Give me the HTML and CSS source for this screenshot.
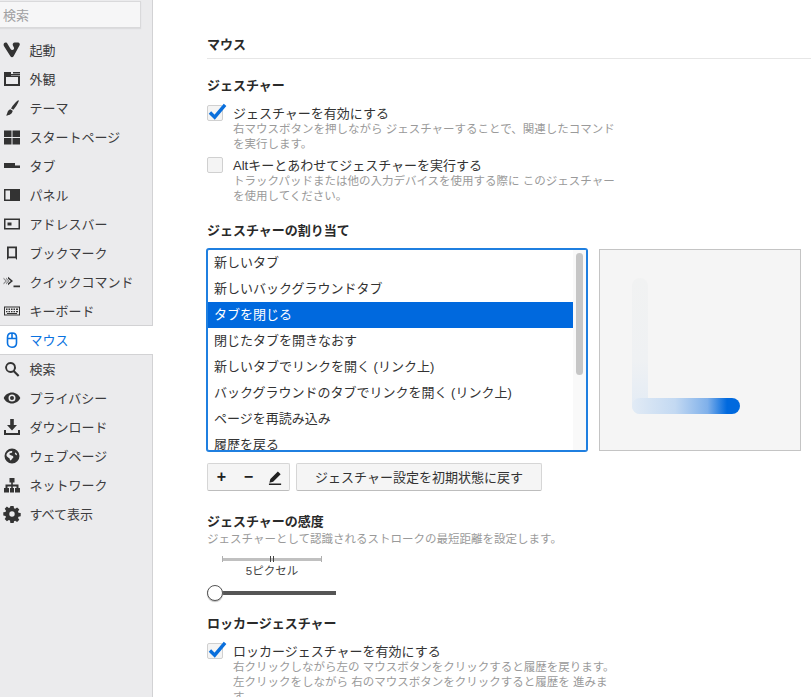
FILE: index.html
```html
<!DOCTYPE html>
<html lang="ja">
<head>
<meta charset="utf-8">
<title>マウス</title>
<link rel="stylesheet" href="styles.css">
</head>
<body>
<div class="app">
<nav class="side">
  <div class="search">検索</div>
  <ul class="menu">
    <li class="item"><svg class="ico" viewBox="0 0 18 18"><path d="M.6 3.6C.6 2.3 1.6 1.6 2.6 1.6c.9 0 1.5.5 2 1.4l3 5c.4.7 1 1 1.6 1 1.400 0 2.300-1.300 1.700-2.500l-1-2c-.7-1.500.3-2.900 1.800-2.900h3.300c1.400 0 2.300 1.500 1.600 2.700l-6 10.900c-.7 1.300-2.500 1.300-3.200 0L.9 5c-.2-.4-.3-.9-.3-1.400z"/></svg><span>起動</span></li>
    <li class="item"><svg class="ico" viewBox="0 0 18 18"><path d="M1 2h7v2h9v1H8v.5h9V16H1zm2 5v7h12V7z"/><rect x="10" y="2" width="7" height="1.500"/></svg><span>外観</span></li>
    <li class="item"><svg class="ico" viewBox="0 0 18 18"><path d="M14.800 1.500c.5-.4 1.200.1.900.7-1.200 2.800-3.200 6-5.300 8.600L8 9.400c1.900-3 4.400-6.300 6.800-7.900zM7.300 10.300l2.400 1.400c-.3 2.700-2.700 4.600-6.700 4.800 1.400-1.200 1-2.600 1.900-4.200.6-1 1.400-1.700 2.400-2z"/></svg><span>テーマ</span></li>
    <li class="item"><svg class="ico" viewBox="0 0 18 18"><path d="M1 2.500h7.500V9H1zM9.500 2.500H17V9H9.500zM1 10h7.500v6.500H1zM9.500 10H17v6.500H9.500z"/></svg><span>スタートページ</span></li>
    <li class="item"><svg class="ico" viewBox="0 0 18 18"><path d="M1 6h11v2h5v3H1z"/><path class="soft" d="M12 8h5v1H12z"/></svg><span>タブ</span></li>
    <li class="item"><svg class="ico" viewBox="0 0 18 18"><path d="M1 3h16v12H1zm1.500 1.500v9H7v-9z"/></svg><span>パネル</span></li>
    <li class="item"><svg class="ico" viewBox="0 0 18 18"><path d="M1 3.500h16v11H1zm1.500 1.500v8h13V5z"/><rect x="4.500" y="7.500" width="4" height="3"/></svg><span>アドレスバー</span></li>
    <li class="item"><svg class="ico" viewBox="0 0 18 18"><path d="M4 2.500h10v13.500l-1.500-1.800H5.500L4 16zm1.800 1.800v8.200h6.400V4.300z"/></svg><span>ブックマーク</span></li>
    <li class="item"><svg class="ico" viewBox="0 0 18 18"><path class="soft" d="M.5 4.500l3.500 3.500-3.500 3.500v-1.500l2-2-2-2zM3 4.500L6.500 8 3 11.500V10l2-2-2-2z"/><path d="M5 3.800L10 8l-5 4.200v-2l2.800-2.200L5 5.800zM10.500 12.500H17v1.800h-6.500z"/></svg><span>クイックコマンド</span></li>
    <li class="item"><svg class="ico" viewBox="0 0 18 18"><path d="M1 4.500h16v9H1zm1 1v7h14v-7z"/><path d="M3 6.500h1.500V8H3zm2.500 0H7V8H5.500zm2.500 0h1.500V8H8zm2.500 0H12V8h-1.500zm2.500 0h2V8h-2zM3 9h1.500v1.300H3zm2.500 0H7v1.300H5.500zM8 9h1.500v1.300H8zm2.500 0H12v1.300h-1.500zM13 9h2v1.300h-2zM4 11h10v1H4z"/></svg><span>キーボード</span></li>
    <li class="item active"><svg class="ico" viewBox="0 0 18 18"><path class="line" d="M4.500 6.500C4.500 3.800 6.200 2 9 2s4.500 1.800 4.500 4.500v5.500c0 2.500-1.800 4.200-4.500 4.200S4.500 14.500 4.500 12zM4.500 7.500h9M9 2v5.500"/></svg><span>マウス</span></li>
    <li class="item"><svg class="ico" viewBox="0 0 18 18"><path d="M7.500 2a5.500 5.500 0 0 1 4.400 8.800l4.500 4.500-1.500 1.500-4.500-4.500A5.500 5.500 0 1 1 7.500 2zm0 2a3.500 3.500 0 1 0 0 7 3.500 3.500 0 0 0 0-7z"/></svg><span>検索</span></li>
    <li class="item"><svg class="ico" viewBox="0 0 18 18"><path d="M9 3.500c3.700 0 6.800 2.300 8.300 5.500-1.500 3.200-4.600 5.500-8.300 5.500S2.200 12.200.7 9C2.200 5.800 5.300 3.500 9 3.500zm0 2a3.500 3.500 0 1 0 0 7 3.500 3.500 0 0 0 0-7zM9 7a2 2 0 1 1 0 4 2 2 0 0 1 0-4z"/></svg><span>プライバシー</span></li>
    <li class="item"><svg class="ico" viewBox="0 0 18 18"><path d="M7.200 1h3.600v6h3.200L9 12.500 4 7h3.200zM1 12h2v3h12v-3h2v5H1z"/></svg><span>ダウンロード</span></li>
    <li class="item"><svg class="ico" viewBox="0 0 18 18"><path fill-rule="evenodd" d="M9 1.500a7.500 7.500 0 1 1 0 15 7.500 7.500 0 0 1 0-15zM3.400 8c.2 2 2 2.300 3 3.300.5.600.3 1.500.8 2 .6.400 1.200-.1 1.400-.7.300-.9 1.300-1.300 1.700-2.100.3-.7-.2-1.500-1-1.700-1-.3-1.900-.7-2.700-1.200-.4-.3-.2-1 .3-1.300.6-.3 1.400-.2 2-.6.500-.4.500-1.200.1-1.700C6.600 3.500 3.700 5.500 3.400 8zm9.200-2.500c-.6.300-.9 1-.6 1.600.4.800 1.300.9 2 1.300.2-1-.4-2.100-1.400-2.900z"/></svg><span>ウェブページ</span></li>
    <li class="item"><svg class="ico" viewBox="0 0 18 18"><path d="M6.500 2h5v4.500H9.800v2H15.500V12h1.500v4.500h-5V12h1.500v-1.500H9.800V12h1.200v4.500H7V12h1.200v-1.500H4.500V12H6v4.500H1V12h1.500V8.500h5.700v-2H6.500z"/></svg><span>ネットワーク</span></li>
    <li class="item"><svg class="ico" viewBox="0 0 18 18"><path d="M7.400 1h3.200l.4 2.200 1.200.5 1.900-1.300 2.200 2.200-1.300 1.900.5 1.200 2.200.4v3.200l-2.200.4-.5 1.200 1.300 1.900-2.200 2.200-1.900-1.300-1.200.5-.4 2.200H7.400L7 15.400l-1.200-.5-1.900 1.300-2.200-2.200L3 12.100l-.5-1.200L.3 10.500V7.300l2.200-.4.5-1.200L1.700 3.800 3.900 1.600l1.900 1.300L7 2.400zM9 6.300a2.700 2.700 0 1 0 0 5.400 2.700 2.700 0 0 0 0-5.400z"/></svg><span>すべて表示</span></li>
  </ul>
</nav>
<main class="main">
  <h1 class="title">マウス</h1>

  <h2 class="head first">ジェスチャー</h2>
  <div class="opt">
    <span class="box on"><svg class="check" viewBox="0 0 20 18"><path d="M2 10l5 5L18 2"/></svg></span>
    <div class="opt-text">
      <div class="opt-label">ジェスチャーを有効にする</div>
      <div class="opt-desc">右マウスボタンを押しながら ジェスチャーすることで、関連したコマンド<br>を実行します。</div>
    </div>
  </div>
  <div class="opt second">
    <span class="box"></span>
    <div class="opt-text">
      <div class="opt-label">Altキーとあわせてジェスチャーを実行する</div>
      <div class="opt-desc">トラックパッドまたは他の入力デバイスを使用する際に このジェスチャー<br>を使用してください。</div>
    </div>
  </div>

  <h2 class="head assign">ジェスチャーの割り当て</h2>
  <div class="gesture">
    <div class="list">
      <ul class="rows">
        <li class="row">新しいタブ</li>
        <li class="row">新しいバックグラウンドタブ</li>
        <li class="row sel">タブを閉じる</li>
        <li class="row">閉じたタブを開きなおす</li>
        <li class="row">新しいタブでリンクを開く (リンク上)</li>
        <li class="row">バックグラウンドのタブでリンクを開く (リンク上)</li>
        <li class="row">ページを再読み込み</li>
        <li class="row">履歴を戻る</li>
      </ul>
      <div class="track"><div class="thumb"></div></div>
    </div>
    <div class="preview">
      <svg class="stroke" viewBox="0 0 200 200">
        <defs>
          <linearGradient id="gv" x1="0" y1="28" x2="0" y2="164" gradientUnits="userSpaceOnUse">
            <stop offset="0" stop-color="#f1f2f2"/><stop offset=".6" stop-color="#eff1f3"/><stop offset="1" stop-color="#e2ebf5"/>
          </linearGradient>
          <linearGradient id="gh" x1="32" y1="0" x2="140" y2="0" gradientUnits="userSpaceOnUse">
            <stop offset="0" stop-color="#e2ebf5"/><stop offset=".4" stop-color="#c3d9f2"/><stop offset=".7" stop-color="#7fb0ea"/><stop offset=".88" stop-color="#0069de"/><stop offset="1" stop-color="#0069de"/>
          </linearGradient>
        </defs>
        <path class="st-v" d="M40 36V156"/>
        <path class="st-h" d="M40 156H132"/>
      </svg>
    </div>
  </div>
  <div class="tools">
    <div class="group">
      <button class="gbtn">+</button>
      <button class="gbtn">−</button>
      <button class="gbtn"><svg class="pen" viewBox="0 0 16 16"><path d="M10.500 1.500l3 3-8 8-4 1 1-4zM1 14.500h13V16H1z"/></svg></button>
    </div>
    <button class="reset">ジェスチャー設定を初期状態に戻す</button>
  </div>

  <h2 class="head sens">ジェスチャーの感度</h2>
  <div class="plain-desc">ジェスチャーとして認識されるストロークの最短距離を設定します。</div>
  <div class="ruler"><span class="mark"></span></div>
  <div class="ruler-label">5ピクセル</div>
  <div class="slider"><span class="knob"></span></div>

  <h2 class="head rocker">ロッカージェスチャー</h2>
  <div class="opt">
    <span class="box on"><svg class="check" viewBox="0 0 20 18"><path d="M2 10l5 5L18 2"/></svg></span>
    <div class="opt-text">
      <div class="opt-label">ロッカージェスチャーを有効にする</div>
      <div class="opt-desc">右クリックしながら左の マウスボタンをクリックすると履歴を戻ります。<br>左クリックをしながら 右のマウスボタンをクリックすると履歴を 進みま<br>す。</div>
    </div>
  </div>
</main>
</div>
</body>
</html>
```

FILE: styles.css
```css
* { box-sizing: border-box; }
html, body { margin: 0; padding: 0; height: 697px; overflow: hidden; background: #fff; }
body { font-family: "Liberation Sans", "Noto Sans CJK JP", sans-serif; color: #333; font-size: 13px; }
ul { list-style: none; margin: 0; padding: 0; }
.app { display: flex; height: 697px; }

.side { flex: 0 0 153px; background: #ebebed; border-right: 1px solid #d2d2d4; padding-top: 1px; }
.search { width: 141px; height: 27px; background: #f6f6f7; border: 1px solid #d9d9db; border-left: 0; box-shadow: 0 1px 1px #dcdcde; padding-left: 3px; line-height: 27px; color: #a0a0a2; font-size: 13px; }
.menu { margin-top: 8px; }
.item { display: flex; align-items: center; height: 29px; padding: 0 0 2px 3px; gap: 8.500px; color: #3c3c3e; position: relative; }
.ico { width: 18px; height: 18px; flex: none; fill: #333; }
.ico .soft { fill: #8a8a8c; }
.active { height: 28px; margin: 0 -1px 1px 0; padding-bottom: 1px; background: #fff; color: #0a72e0; box-shadow: 0 -1px 0 #d2d2d4, 0 1px 0 #d2d2d4; }
.active .ico { fill: none; }
.active .line { fill: none; stroke: #0a72e0; stroke-width: 1.600; }

.main { flex: 1; min-width: 0; padding: 36px 0 0 54px; }
.title { margin: 0; font-size: 13px; line-height: 15px; font-weight: 700; padding: 1px 0 6px; border-bottom: 1px solid #e6e6e6; color: #2a2a2a; }
.head { margin: 0; font-size: 13px; line-height: 15px; padding-top: 1px; font-weight: 700; color: #2a2a2a; }
.head.first { margin-top: 18px; }
.head.assign { margin-top: 18px; }
.head.sens { margin-top: 22px; }
.head.rocker { margin-top: 14px; }

.opt { display: flex; gap: 10px; margin-top: 12px; }
.opt.second { margin-top: 5px; }
.box { flex: none; width: 16px; height: 16px; background: #f4f4f4; border: 1px solid #d0d0d0; border-radius: 2px; position: relative; }
.check { position: absolute; left: 0; top: -3px; width: 19px; height: 17px; overflow: visible; }
.check path { fill: none; stroke: #0a6fdc; stroke-width: 3.600; }
.opt-label { font-size: 13px; line-height: 15px; padding-top: 1px; color: #333; white-space: nowrap; }
.opt-desc { font-size: 11.500px; line-height: 15px; padding-top: 1px; color: #9a9a9a; white-space: nowrap; }
.plain-desc { font-size: 11.500px; line-height: 14px; padding-top: 2px; color: #9a9a9a; margin-top: 1px; white-space: nowrap; }

.gesture { display: flex; gap: 12px; margin-top: 11px; }
.list { display: flex; width: 380px; height: 202px; border: 1px solid #1f7fe0; box-shadow: 0 0 0 1px #1f7fe0; border-radius: 2px; overflow: hidden; background: #fff; }
.rows { flex: 1; min-width: 0; }
.row { height: 26px; line-height: 26px; padding-left: 6px; font-size: 13px; color: #333; white-space: nowrap; }
.row.sel { background: #0069de; color: #fff; }
.track { flex: 0 0 13px; background: #f9f9f9; padding: 3px 3px 0; }
.thumb { height: 122px; background: #c6c6c6; border-radius: 4px; }

.preview { flex: none; width: 202px; height: 202px; background: #f5f5f5; border: 1px solid #c4c4c4; }
.stroke { display: block; width: 200px; height: 200px; }
.st-v, .st-h { fill: none; stroke-width: 16; stroke-linecap: round; }
.st-v { stroke: url(#gv); }
.st-h { stroke: url(#gh); }

.tools { display: flex; gap: 6px; margin-top: 12px; }
.group { display: flex; height: 28px; border: 1px solid #d6d6d6; border-bottom-color: #bdbdbd; border-radius: 2px; background: #f5f5f5; }
.gbtn { width: 27px; height: 26px; padding: 0; border: 0; background: transparent; font-family: inherit; font-size: 16px; font-weight: 700; line-height: 24px; color: #222; display: flex; align-items: center; justify-content: center; }
.pen { width: 15px; height: 15px; fill: #222; }
.reset { width: 246px; height: 28px; padding: 0 0 2px; border: 1px solid #d6d6d6; border-bottom-color: #bdbdbd; border-radius: 2px; background: #f5f5f5; font-family: inherit; font-size: 13px; color: #333; }

.ruler { width: 100px; height: 6px; margin: 10px 0 0 15px; background: linear-gradient(#c0c0c0, #c0c0c0) center / 100% 3px no-repeat; border-left: 1px solid #b0b0b0; border-right: 1px solid #b0b0b0; position: relative; }
.mark { position: absolute; left: 47px; top: 0; width: 4px; height: 6px; border-left: 1px solid #444; border-right: 1px solid #444; }
.ruler-label { width: 100px; margin-left: 15px; text-align: center; font-size: 11.500px; line-height: 14px; margin-top: 2px; color: #444; }
.slider { width: 129px; height: 16px; margin-top: 7px; background: linear-gradient(#555, #555) center / 100% 4px no-repeat; border-radius: 2px; position: relative; }
.knob { position: absolute; left: 0; top: 0; width: 16px; height: 16px; border-radius: 50%; background: #fff; border: 1px solid #555; box-shadow: 0 1px 1px #bbb; }
```
